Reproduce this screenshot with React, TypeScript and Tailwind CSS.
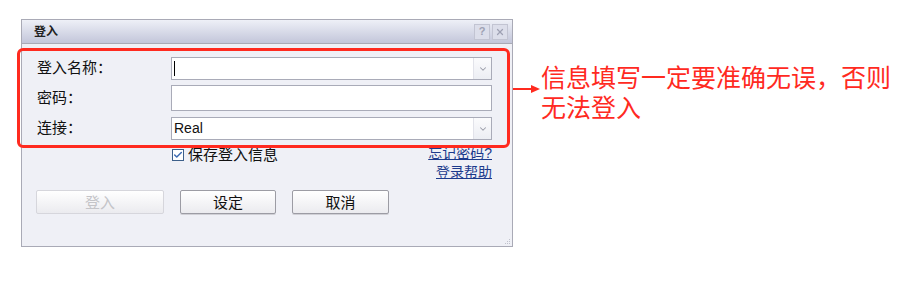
import { Check, ChevronDown, X } from 'lucide-react';

const cjk = "font-['Liberation_Sans','Noto_Sans_CJK_SC',sans-serif]";

const Combo = ({ value, caret }: { value?: string; caret?: boolean }) => (
  <div className="flex h-[23px] w-[321px] border border-[#a9abb8] bg-white">
    <div className="flex flex-1 items-center pl-[2px] text-[14px] text-[#111]">
      {caret && <span className="h-[15px] w-px bg-black" />}
      {value}
    </div>
    <div className="flex w-[18px] items-center justify-center border-l border-[#e2e3ea] bg-gradient-to-b from-[#fbfbfd] to-[#eceef3]">
      <ChevronDown size={10} strokeWidth={2.5} className="text-[#9a9ca8]" />
    </div>
  </div>
);

const Btn = ({ label, w, disabled }: { label: string; w: string; disabled?: boolean }) => (
  <button
    className={`h-[24px] ${w} rounded-[2px] border bg-gradient-to-b from-white to-[#ebebef] text-[15px] leading-none ${
      disabled ? 'border-[#d6d6dc] text-[#c4c4c8]' : 'border-[#9c9ca4] text-[#111] shadow-[0_1px_0_#d0d0d6]'
    }`}
  >
    {label}
  </button>
);

export default function App() {
  return (
    <div className={`flex h-[292px] w-[911px] items-start bg-white pl-[21px] pt-[19px] ${cjk}`}>
      <div className="relative flex h-[228px] w-[492px] flex-col border border-[#a9aab6] bg-[#eff0f6]">
        {/* title bar */}
        <div className="flex h-[24px] items-center justify-between border-b border-[#a9aab6] bg-gradient-to-b from-[#eef0f7] to-[#c3c6da] pl-[12px] pr-[4px]">
          <span className="text-[12px] font-bold text-[#222]">登入</span>
          <div className="flex gap-[2px]">
            <span className="flex h-[16px] w-[16px] items-center justify-center border border-[#c2c4d2] bg-[#dcdeea] text-[11px] font-bold text-[#9ea1b3]">?</span>
            <span className="flex h-[16px] w-[16px] items-center justify-center border border-[#c2c4d2] bg-[#dcdeea]">
              <X size={10} strokeWidth={3} className="text-[#9ea1b3]" />
            </span>
          </div>
        </div>

        {/* form */}
        <div className="flex flex-col pl-[15px] pt-[13px]">
          <div className="flex items-center">
            <span className="w-[134px] text-[15px] text-[#111]">登入名称：</span>
            <Combo caret />
          </div>
          <div className="mt-[5px] flex items-center">
            <span className="w-[134px] text-[15px] text-[#111]">密码：</span>
            <div className="h-[26px] w-[321px] border border-[#a9abb8] bg-white" />
          </div>
          <div className="mt-[6px] flex items-center">
            <span className="w-[134px] text-[15px] text-[#111]">连接：</span>
            <Combo value="Real" />
          </div>
          <div className="mt-[4px] flex items-start justify-between pl-[135px] pr-[20px]">
            <label className="mt-[1px] flex items-center gap-[4px] text-[15px] leading-[19px] text-[#111]">
              <span className="flex h-[12px] w-[12px] items-center justify-center border border-[#3c5f8a] bg-white">
                <Check size={10} strokeWidth={3.5} className="text-[#3d6bb3]" />
              </span>
              保存登入信息
            </label>
            <div className="flex flex-col items-end text-[14px] leading-[19px] text-[#1c3a8c]">
              <a className="underline">忘记密码?</a>
              <a className="underline">登录帮助</a>
            </div>
          </div>
          <div className="-ml-px mt-[8px] flex gap-[16px]">
            <Btn label="登入" w="w-[128px]" disabled />
            <Btn label="设定" w="w-[96px]" />
            <Btn label="取消" w="w-[97px]" />
          </div>
        </div>

        {/* resize grip */}
        <svg className="absolute bottom-[1px] right-[1px]" width="8" height="8" viewBox="0 0 8 8">
          <rect x="6" y="2" width="1" height="1" fill="#c0c2cc" />
          <rect x="4" y="4" width="1" height="1" fill="#c0c2cc" />
          <rect x="6" y="4" width="1" height="1" fill="#c0c2cc" />
          <rect x="2" y="6" width="1" height="1" fill="#c0c2cc" />
          <rect x="4" y="6" width="1" height="1" fill="#c0c2cc" />
          <rect x="6" y="6" width="1" height="1" fill="#c0c2cc" />
        </svg>

        {/* annotation frame */}
        <div className="absolute left-[-5px] top-[28px] h-[100px] w-[493px] rounded-[6px] border-[3px] border-[#ff2a1f]" />
      </div>

      {/* annotation note */}
      <div className="-ml-[2px] mt-[44px] flex items-start">
        <svg className="mt-[21px]" width="30" height="10" viewBox="0 0 30 10">
          <line x1="0" y1="5" x2="22" y2="5" stroke="#ff2a1f" strokeWidth="2" />
          <polygon points="20,1 29,5 20,9" fill="#ff2a1f" />
        </svg>
        <p className="w-[360px] text-[25px] leading-[30px] text-[#ff2a1f]">信息填写一定要准确无误，否则无法登入</p>
      </div>
    </div>
  );
}
